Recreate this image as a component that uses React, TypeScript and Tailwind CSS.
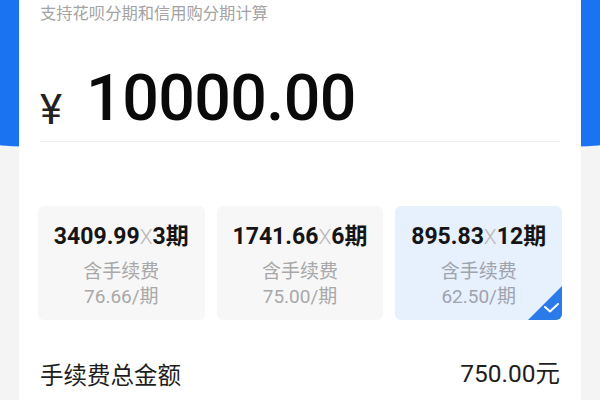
import React from "react";

const cn = '"Noto Sans CJK SC", sans-serif';
const num = 'Roboto, "Noto Sans CJK SC", sans-serif';

const plans = [
  { amt: "3409.99", n: "3", fee: "76.66/期", sel: false },
  { amt: "1741.66", n: "6", fee: "75.00/期", sel: false },
  { amt: "895.83", n: "12", fee: "62.50/期", sel: true },
];

export default function App() {
  return (
    <div className="relative w-[600px] h-[400px] overflow-hidden bg-[#f4f4f4]">
      <div className="absolute left-0 top-0 w-full h-[149px] bg-[#1a74f1] rounded-b-[50%_4px]" />
      <div className="relative mx-[19px] h-[400px] bg-white px-[21px]">
        <div className="text-[16.3px] leading-[24px] text-[#a3a3a3]" style={{ fontFamily: cn }}>
          支持花呗分期和信用购分期计算
        </div>
        <div className="flex items-baseline h-[118px] pt-[42px] border-b border-[#efefef]">
          <span className="text-[42px] leading-none text-[#222] mr-[24px] translate-y-[4px]" style={{ fontFamily: num }}>¥</span>
          <span className="text-[64.5px] leading-none font-medium text-[#0a0a0a] tracking-[-0.6px]" style={{ fontFamily: num }}>10000.00</span>
        </div>
        <div className="grid grid-cols-3 gap-3 mt-[64px] -mx-[2px]">
          {plans.map((p) => (
            <div
              key={p.n}
              className={`relative overflow-hidden rounded-md h-[114px] flex flex-col items-center pt-[17px] ${p.sel ? "bg-[#e7f0fd]" : "bg-[#f7f7f7]"}`}
            >
              <div className="text-[23px] leading-[28px] font-bold text-[#151515] whitespace-nowrap" style={{ fontFamily: num }}>
                {p.amt}
                <span className="font-light text-[#b8b8b8] text-[21px]">X</span>
                {p.n}期
              </div>
              <div className={`text-[19px] leading-[26px] mt-[6px] ${p.sel ? "text-[#9ea4ae]" : "text-[#a8a8a8]"}`} style={{ fontFamily: cn }}>
                含手续费
              </div>
              <div className={`text-[19px] leading-[26px] mt-[1px] ${p.sel ? "text-[#9ea4ae]" : "text-[#a8a8a8]"}`} style={{ fontFamily: num }}>
                {p.fee}
              </div>
              {p.sel && (
                <svg className="absolute right-0 bottom-0" width="34" height="34" viewBox="0 0 34 34">
                  <path d="M34 0 L34 34 L0 34 Z" fill="#2a7be9" />
                  <path d="M17 21 L22 25.5 L30 18" stroke="#fff" strokeWidth="2" fill="none" strokeLinecap="round" strokeLinejoin="round" />
                </svg>
              )}
            </div>
          ))}
        </div>
        <div className="flex justify-between items-center mt-[39px]">
          <span className="text-[23.5px] leading-[30px] text-[#1e1e1e]" style={{ fontFamily: cn }}>手续费总金额</span>
          <span className="text-[24.5px] leading-[30px] text-[#1e1e1e]" style={{ fontFamily: num }}>750.00元</span>
        </div>
      </div>
    </div>
  );
}
